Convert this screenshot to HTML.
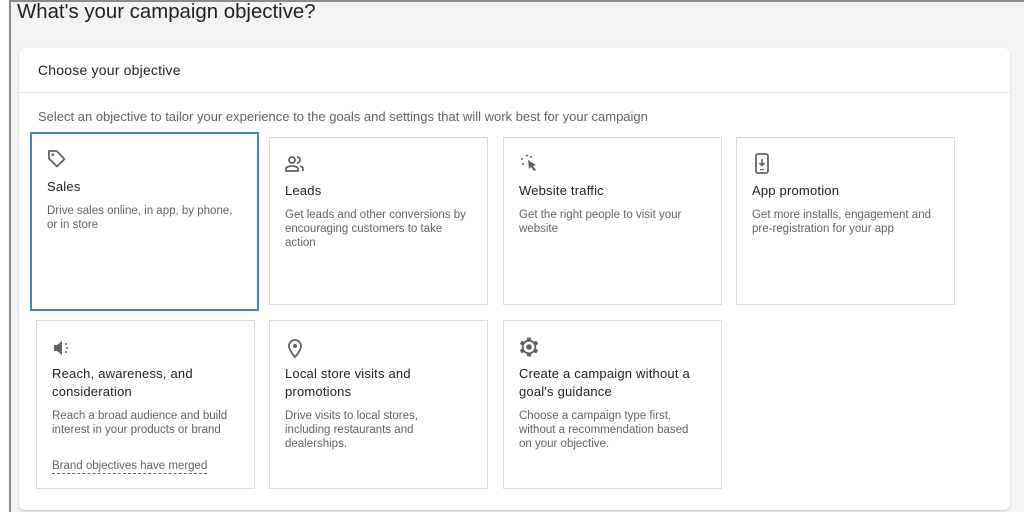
<!DOCTYPE html>
<html><head><style>
*{margin:0;padding:0;box-sizing:border-box}
body{width:1024px;height:512px;overflow:hidden;background:#fff;font-family:"Liberation Sans",sans-serif;position:relative}
.frame{position:absolute;left:9px;top:0;width:1015px;height:512px;background:#f1f3f4;border-left:2px solid #8a8a8a;border-top:2px solid #8a8a8a}
h1{position:absolute;left:17px;top:1px;font-size:20.4px;font-weight:normal;color:#202124}
.card{position:absolute;left:19px;top:48px;width:991px;height:462px;background:#fff;border-radius:6px;box-shadow:0 1px 2px rgba(0,0,0,.2)}
.hd{position:absolute;left:38px;top:62px;font-size:14px;color:#202124;letter-spacing:.2px}
.div{position:absolute;left:19px;top:92px;width:991px;height:1px;background:#e8eaed}
.sub{position:absolute;left:38px;top:109px;font-size:13px;color:#5f6368}
.b{position:absolute;border:1px solid #dadce0;background:#fff;padding:0}
.b.sel{border:2px solid #4a7fc1}
.b svg{position:absolute;left:15px}
.t{position:absolute;left:15px;font-size:13px;color:#202124;line-height:18px;letter-spacing:.2px}
.d{position:absolute;left:15px;font-size:11.5px;color:#5f6368;line-height:14px}
.m{position:absolute;left:15px;top:138px;font-size:11.5px;color:#5f6368;border-bottom:1px dashed #5f6368;line-height:14px}
</style></head><body>
<div class="frame"></div>
<h1>What's your campaign objective?</h1>
<div class="card"></div>
<div class="hd">Choose your objective</div>
<div class="div"></div>
<div class="sub">Select an objective to tailor your experience to the goals and settings that will work best for your campaign</div>

<div class="b sel" style="left:30px;top:132px;width:229px;height:179px">
<svg style="top:14px;left:14px" width="22" height="22" viewBox="0 0 22 22"><path d="M3 3h7.5l8 8-7.5 7.5-8-8z" fill="none" stroke="#5f6368" stroke-width="1.8" stroke-linejoin="round"/><circle cx="6.8" cy="6.8" r="1.3" fill="#5f6368"/></svg>
<div class="t" style="top:44px">Sales</div>
<div class="d" style="top:70px">Drive sales online, in app, by phone,<br>or in store</div>
</div>

<div class="b" style="left:269px;top:137px;width:219px;height:168px">
<svg style="top:17px" width="20" height="18" viewBox="0 0 20 18"><circle cx="7" cy="5" r="3" fill="none" stroke="#5f6368" stroke-width="1.8"/><path d="M1 16v-2c0-2 3-3 6-3s6 1 6 3v2z" fill="none" stroke="#5f6368" stroke-width="1.8"/><path d="M12 2a3 3 0 0 1 0 6M15 11c2 .5 3 1.5 3 3v2" fill="none" stroke="#5f6368" stroke-width="1.8"/></svg>
<div class="t" style="top:44px">Leads</div>
<div class="d" style="top:70px">Get leads and other conversions by<br>encouraging customers to take<br>action</div>
</div>

<div class="b" style="left:503px;top:137px;width:219px;height:168px">
<svg style="top:16px" width="20" height="18" viewBox="0 0 20 18"><path d="M9 6l8 5-3 1 3 4-2 1-3-4-2 2z" fill="#5f6368"/><circle cx="8" cy="1.5" r="1" fill="#5f6368"/><circle cx="3" cy="5" r="1" fill="#5f6368"/><circle cx="4" cy="10" r="1" fill="#5f6368"/><circle cx="12" cy="3" r="1" fill="#5f6368"/></svg>
<div class="t" style="top:44px">Website traffic</div>
<div class="d" style="top:70px">Get the right people to visit your<br>website</div>
</div>

<div class="b" style="left:736px;top:137px;width:219px;height:168px">
<svg style="top:15px" width="20" height="22" viewBox="0 0 20 22"><rect x="4" y="1" width="12" height="19" rx="2" fill="none" stroke="#5f6368" stroke-width="1.8"/><path d="M10 6v6M7.5 10l2.5 2.5 2.5-2.5" fill="none" stroke="#5f6368" stroke-width="1.6"/><rect x="8" y="16" width="4" height="1.2" fill="#5f6368"/></svg>
<div class="t" style="top:44px">App promotion</div>
<div class="d" style="top:70px">Get more installs, engagement and<br>pre-registration for your app</div>
</div>

<div class="b" style="left:36px;top:320px;width:219px;height:169px">
<svg style="top:18px" width="20" height="18" viewBox="0 0 20 18"><path d="M2 6h3l5-4v14l-5-4H2z" fill="#5f6368"/><circle cx="14" cy="5" r="1" fill="#5f6368"/><circle cx="15" cy="9" r="1" fill="#5f6368"/><circle cx="14" cy="13" r="1" fill="#5f6368"/></svg>
<div class="t" style="top:44px">Reach, awareness, and<br>consideration</div>
<div class="d" style="top:88px">Reach a broad audience and build<br>interest in your products or brand</div>
<div class="m">Brand objectives have merged</div>
</div>

<div class="b" style="left:269px;top:320px;width:219px;height:169px">
<svg style="top:16px" width="20" height="22" viewBox="0 0 20 22"><path d="M10 20s-6-6.5-6-11a6 6 0 0 1 12 0c0 4.5-6 11-6 11z" fill="none" stroke="#5f6368" stroke-width="1.8"/><circle cx="10" cy="9" r="2" fill="#5f6368"/></svg>
<div class="t" style="top:44px">Local store visits and<br>promotions</div>
<div class="d" style="top:88px">Drive visits to local stores,<br>including restaurants and<br>dealerships.</div>
</div>

<div class="b" style="left:503px;top:320px;width:219px;height:169px">
<svg style="top:16px" width="20" height="20" viewBox="0 0 20 20"><g fill="#5f6368"><rect x="8" y="0.5" width="4" height="4" rx="0.8"/><rect x="8" y="15.5" width="4" height="4" rx="0.8"/><rect x="8" y="0.5" width="4" height="4" rx="0.8" transform="rotate(60 10 10)"/><rect x="8" y="0.5" width="4" height="4" rx="0.8" transform="rotate(120 10 10)"/><rect x="8" y="0.5" width="4" height="4" rx="0.8" transform="rotate(240 10 10)"/><rect x="8" y="0.5" width="4" height="4" rx="0.8" transform="rotate(300 10 10)"/></g><circle cx="10" cy="10" r="6.3" fill="#fff" stroke="#5f6368" stroke-width="1.8"/><circle cx="10" cy="10" r="2.8" fill="#5f6368"/></svg>
<div class="t" style="top:44px">Create a campaign without a<br>goal's guidance</div>
<div class="d" style="top:88px">Choose a campaign type first,<br>without a recommendation based<br>on your objective.</div>
</div>
</body></html>
